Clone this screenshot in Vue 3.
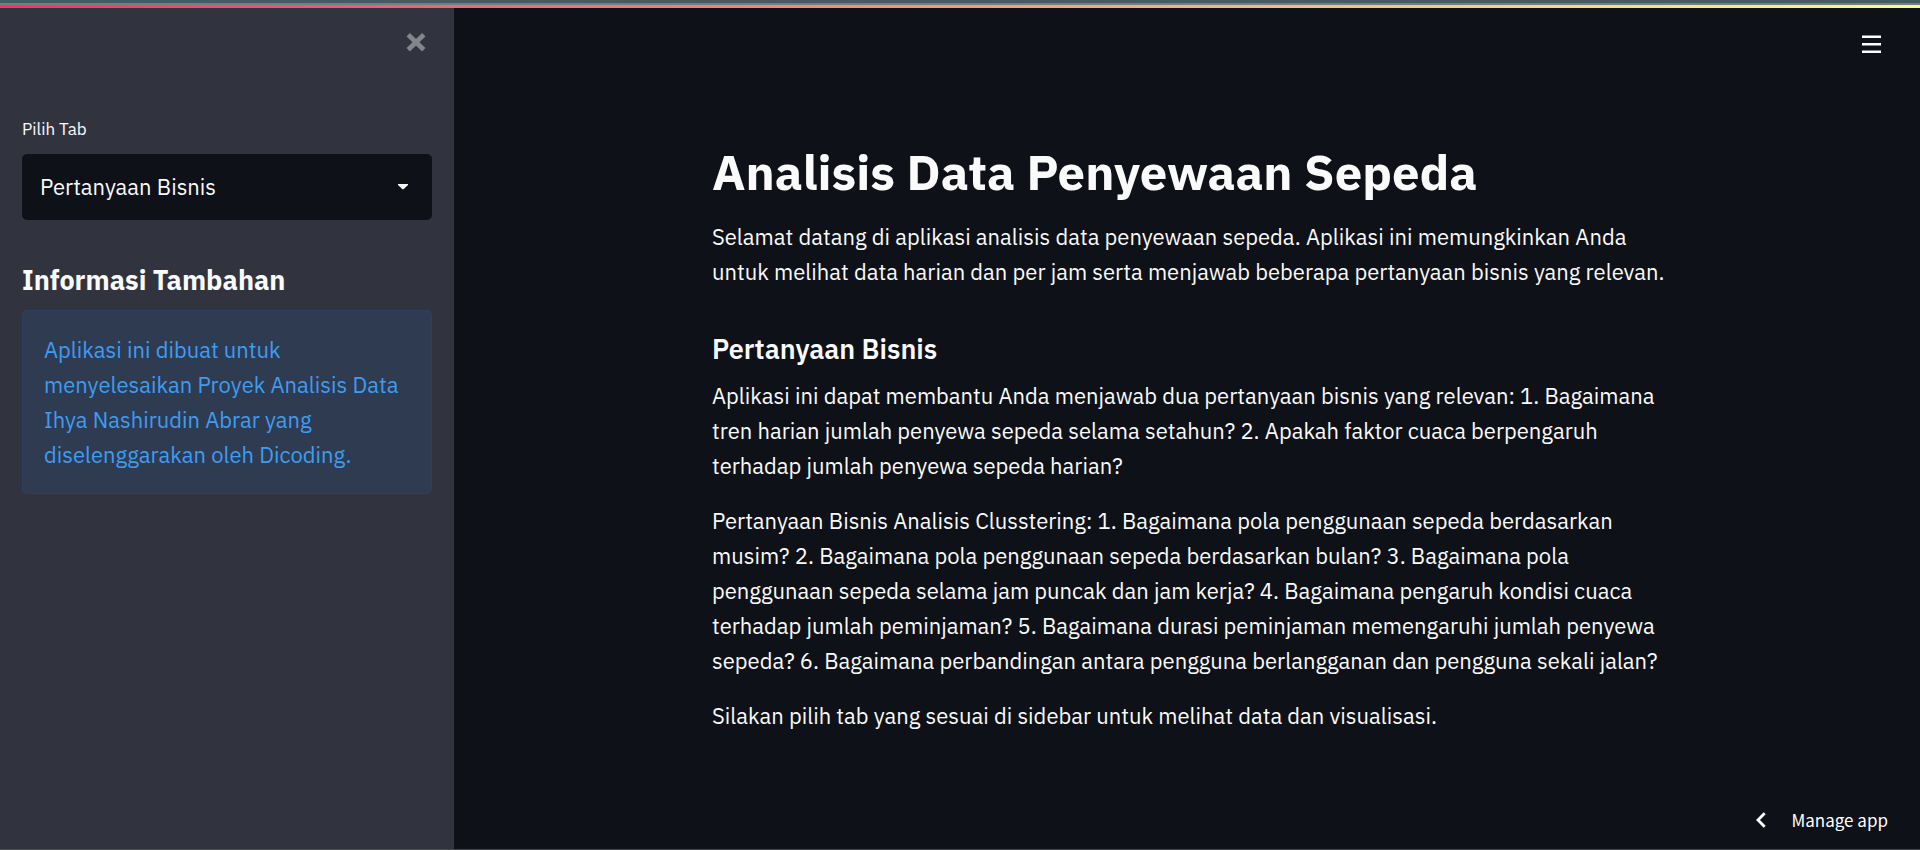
<script setup>
import { ref } from 'vue'

const tabs = ['Pertanyaan Bisnis']
const tab = ref(tabs[0])

const info = `Aplikasi ini dibuat untuk
menyelesaikan Proyek Analisis Data
Ihya Nashirudin Abrar yang
diselenggarakan oleh Dicoding.`

const intro = `Selamat datang di aplikasi analisis data penyewaan sepeda. Aplikasi ini memungkinkan Anda
untuk melihat data harian dan per jam serta menjawab beberapa pertanyaan bisnis yang relevan.`

const paragraphs = [
  `Aplikasi ini dapat membantu Anda menjawab dua pertanyaan bisnis yang relevan: 1. Bagaimana
tren harian jumlah penyewa sepeda selama setahun? 2. Apakah faktor cuaca berpengaruh
terhadap jumlah penyewa sepeda harian?`,
  `Pertanyaan Bisnis Analisis Clusstering: 1. Bagaimana pola penggunaan sepeda berdasarkan
musim? 2. Bagaimana pola penggunaan sepeda berdasarkan bulan? 3. Bagaimana pola
penggunaan sepeda selama jam puncak dan jam kerja? 4. Bagaimana pengaruh kondisi cuaca
terhadap jumlah peminjaman? 5. Bagaimana durasi peminjaman memengaruhi jumlah penyewa
sepeda? 6. Bagaimana perbandingan antara pengguna berlangganan dan pengguna sekali jalan?`,
  'Silakan pilih tab yang sesuai di sidebar untuk melihat data dan visualisasi.',
]
</script>

<template>
  <div class="page">
    <div class="frame-edge"></div>
    <div class="decoration"></div>

    <div class="layout">
      <aside class="sidebar">
        <div class="sidebar-top">
          <button class="icon-button" type="button" aria-label="Tutup sidebar">
            <svg width="20" height="20" viewBox="0 0 20 20" aria-hidden="true">
              <path d="M2.200 2.700 17.800 17.700M17.800 2.700 2.200 17.700" fill="none" stroke="#83848c" stroke-width="4.800" />
            </svg>
          </button>
        </div>

        <label class="field-label" for="tab">Pilih Tab</label>
        <div class="select-box">
          <select id="tab" v-model="tab">
            <option v-for="t in tabs" :key="t">{{ t }}</option>
          </select>
          <svg class="caret" width="10" height="6" viewBox="0 0 10 6" aria-hidden="true">
            <path d="M0 0H10V1L5.800 5Q5 5.700 4.200 5L0 1Z" fill="#fafafa" />
          </svg>
        </div>

        <h2 class="sidebar-title">Informasi Tambahan</h2>
        <p class="info">{{ info }}</p>
      </aside>

      <main class="main">
        <header class="toolbar">
          <button class="icon-button" type="button" aria-label="Menu">
            <svg width="19" height="18" viewBox="0 0 19 18" aria-hidden="true">
              <path d="M0 .5H19V3H0ZM0 8H19V10.500H0ZM0 15.500H19V18H0Z" fill="#fff" />
            </svg>
          </button>
        </header>

        <article class="content">
          <h1>Analisis Data Penyewaan Sepeda</h1>
          <p>{{ intro }}</p>
          <h3>Pertanyaan Bisnis</h3>
          <p v-for="(text, i) in paragraphs" :key="i">{{ text }}</p>
        </article>

        <footer class="footer">
          <button class="manage" type="button">
            <svg width="10" height="16" viewBox="0 0 10 16" aria-hidden="true">
              <path d="M8.700 1.200 2 8 8.700 14.800" fill="none" stroke="#fff" stroke-width="2.800" />
            </svg>
            <span>Manage app</span>
          </button>
        </footer>
      </main>
    </div>
  </div>
</template>

<style>
body {
  background: #0e1117;
}
</style>

<style scoped>
.page {
  box-sizing: border-box;
  display: flex;
  flex-direction: column;
  min-height: 100vh;
  border-bottom: 1px solid #484a52;
  background: #0e1117;
  color: #fafafa;
  font-family: "IBM Plex Sans", Roboto, "Liberation Sans", sans-serif;
  font-size: 22px;
  line-height: 35px;
}

.frame-edge {
  height: 3px;
  background: #465a63;
  border-bottom: 2px solid #728081;
}

.decoration {
  height: 3px;
  background: linear-gradient(90deg, #f63366, #fffd80);
}

.layout {
  flex: 1;
  display: grid;
  grid-template-columns: 454px 1fr;
}

.sidebar {
  padding: 0 22px;
  background: #31333f;
}

.sidebar-top {
  display: flex;
  justify-content: flex-end;
  padding: 24px 6px 63px;
}

.icon-button {
  display: flex;
  padding: 0;
  border: 0;
  background: none;
  cursor: pointer;
}

.field-label {
  display: block;
  margin-bottom: 10px;
  font-size: 17px;
  line-height: 29px;
}

.select-box {
  position: relative;
  display: flex;
  align-items: center;
}

.select-box select {
  flex: 1;
  height: 66px;
  padding: 0 48px 2px 18px;
  border: 0;
  border-radius: 5px;
  background: #0e1117;
  color: #fafafa;
  font: inherit;
  appearance: none;
  cursor: pointer;
}

.caret {
  position: absolute;
  right: 24px;
  pointer-events: none;
}

.sidebar-title {
  margin: 43px 0 14px;
  font-size: 27px;
  font-weight: 700;
  line-height: 33px;
}

.info {
  margin: 0;
  padding: 21px;
  border: 1px solid #2c4060;
  border-radius: 5px;
  background: #2f3b51;
  color: #3d9df3;
  white-space: pre-line;
}

.main {
  display: flex;
  flex-direction: column;
}

.toolbar {
  display: flex;
  justify-content: flex-end;
  padding: 27px 39px 0;
}

.content {
  box-sizing: border-box;
  flex: 1;
  width: 100%;
  max-width: 994px;
  margin: 0 auto;
  padding: 89px 0 0 22px;
}

.content h1 {
  margin: 0 0 18px;
  font-size: 49px;
  font-weight: 700;
  line-height: 59px;
}

.content h3 {
  margin: 43px 0 13px;
  font-size: 27px;
  font-weight: 600;
  line-height: 33px;
}

.content p {
  margin: 0 0 20px;
  white-space: pre-line;
}

.footer {
  display: flex;
  justify-content: flex-end;
  padding: 0 32px 15px;
}

.manage {
  display: flex;
  align-items: center;
  gap: 25px;
  padding: 0;
  border: 0;
  background: none;
  color: #fff;
  font-family: "Source Sans Pro", "Noto Sans CJK SC", sans-serif;
  font-size: 17px;
  line-height: 28px;
  cursor: pointer;
}
</style>
